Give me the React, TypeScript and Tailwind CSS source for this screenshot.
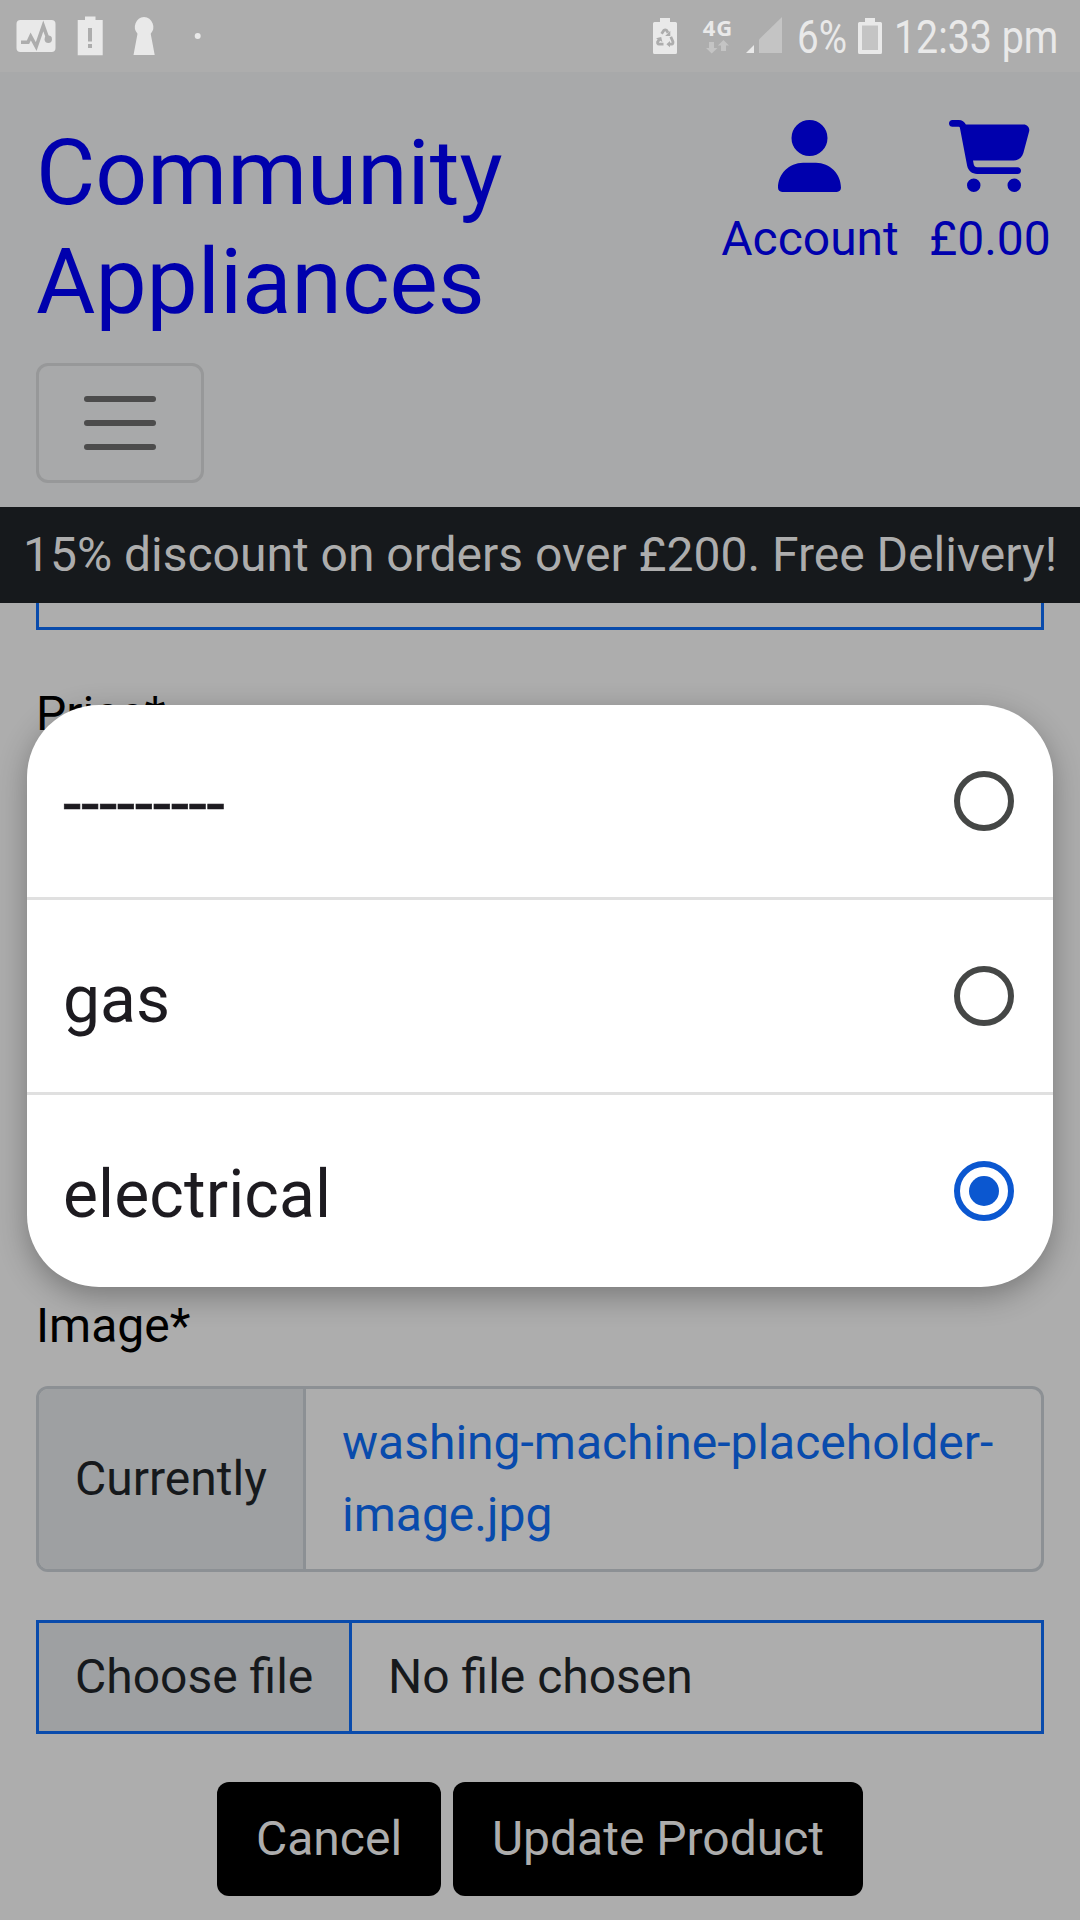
import type { ReactNode } from "react";
import { FaCartShopping, FaUser } from "react-icons/fa6";

function StatusBar() {
  return (
    <div className="flex h-[72px] shrink-0 bg-[#adadad] text-[#e9e9e9]">
      <svg className="h-[72px] w-[210px]" viewBox="0 0 210 72" fill="currentColor">
        <rect x="16.5" y="20" width="39" height="32" rx="4" />
        <path d="M21 42.3h7l2.700-5.800 5.500 10L43.300 26l4.500 12.500" fill="none" stroke="#adadad" strokeWidth="3.600" />
        <circle cx="48.300" cy="39.300" r="3.700" fill="#adadad" />
        <path d="M85 16.500h10.500v3.500h7.200v35.300H77.700V20H85z" />
        <path d="M88 28h4v13.500h-4zM88 44h4v4h-4z" fill="#adadad" />
        <path d="M144 17a10 10 0 0 1 6.700 16.700L154.700 55h-21.200l4-21.300A10 10 0 0 1 144 17z" />
        <circle cx="197.700" cy="36" r="3" />
      </svg>
      <div className="ml-auto flex">
        <svg className="h-[72px] w-[24px]" viewBox="0 0 24 72" fill="currentColor">
          <path d="M7 18h10v4h5.500a1.500 1.500 0 0 1 1.500 1.500v29a1.500 1.500 0 0 1-1.500 1.500h-21A1.500 1.500 0 0 1 0 52.500v-29A1.500 1.500 0 0 1 1.500 22H7z" />
          <g fill="none" stroke="#adadad" strokeWidth="2.800">
            <path d="M8.600 33.800L10.800 30.400Q12.200 29.300 13.600 30.400L15 32.800" />
            <path d="M6.300 39.200L4.600 42Q4.300 44 6 44.200H10.500" />
            <path d="M17.800 36.800L19.900 41.700Q20.300 44 18.500 44.200H16" />
          </g>
          <path d="M17.300 30.800V36h-5.100zM3 38.200l5.200-1.200 1.200 5zM17 41v6.200L13.400 44.200z" fill="#adadad" />
        </svg>
        <div className="ml-[27px] flex w-[28px] flex-col items-center pt-[16px]">
          <span className="font-['Open_Sans',sans-serif] text-[22px] leading-[22px] font-bold tracking-[1px]">4G</span>
          <svg className="mt-[2px] h-[14px] w-[24px]" viewBox="0 0 24 14" fill="#c4c4c4">
            <path d="M3 2h5v6h3.500L5.700 13.500 0 8h3zM15 11h5V5.500h3L17.500 0 11.800 5.500H15z" />
          </svg>
        </div>
        <svg className="ml-[14px] h-[72px] w-[37px]" viewBox="0 0 37 72">
          <path d="M0 53l8-8v8z" fill="#e9e9e9" />
          <path d="M13 39.500L36 17v36H13z" fill="#c4c4c4" />
        </svg>
        <span className="ml-[14px] flex w-[49px] items-center whitespace-nowrap">
          <span className="block origin-left scale-x-[0.84] pt-[2px] text-[46px] leading-[72px]">6%</span>
        </span>
        <svg className="ml-[12px] h-[72px] w-[24px]" viewBox="0 0 24 72" fill="currentColor">
          <path d="M7 18h10v4h5.500a1.500 1.500 0 0 1 1.500 1.500v29a1.500 1.500 0 0 1-1.500 1.500h-21A1.500 1.500 0 0 1 0 52.500v-29A1.500 1.500 0 0 1 1.500 22H7z" />
          <path d="M4 25.500h16V50H4z" fill="#c4c4c4" />
        </svg>
        <span className="ml-[12px] flex w-[186px] items-center whitespace-nowrap">
          <span className="block origin-left scale-x-[0.855] pt-[2px] text-[46px] leading-[72px]">12:33 pm</span>
        </span>
      </div>
    </div>
  );
}

function Header() {
  return (
    <header className="h-[435px] shrink-0 bg-[#a8a9aa]">
      <div className="flex justify-between pr-[30px] text-[#0000ad]">
        <h1 className="w-[500px] pt-[46px] pl-[36px] text-[91.1px] leading-[109px]">Community Appliances</h1>
        <nav className="flex gap-[30px] pt-[48px]">
          <a className="flex w-[180px] flex-col items-center">
            <FaUser className="mr-[0.5px] h-[72px] w-[63px]" />
            <span className="mt-[11px] leading-[72px]">Account</span>
          </a>
          <a className="flex w-[120px] flex-col items-center">
            <FaCartShopping className="mr-[0.5px] h-[72px] w-[81px]" />
            <span className="mt-[11px] leading-[72px]">£0.00</span>
          </a>
        </nav>
      </div>
      <button className="mt-[27px] ml-[36px] flex h-[120px] w-[168px] flex-col items-center justify-center gap-[18px] rounded-[12px] border-[3px] border-[#979899]">
        <span className="h-[6px] w-[72px] rounded-full bg-[#4c4c4c]" />
        <span className="h-[6px] w-[72px] rounded-full bg-[#4c4c4c]" />
        <span className="h-[6px] w-[72px] rounded-full bg-[#4c4c4c]" />
      </button>
    </header>
  );
}

function ProductForm() {
  return (
    <main className="px-[36px] leading-[72px]">
      <div className="h-[27px] border-x-[3px] border-b-[3px] border-[#094bac]" />
      <div className="mt-[48px] h-[612px] text-black">Price*</div>
      <div className="text-black">Image*</div>
      <div className="mt-[24px] flex h-[186px] overflow-hidden rounded-[12px] border-[3px] border-[#8c9094]">
        <div className="flex w-[267px] shrink-0 items-center border-r-[3px] border-[#8c9094] bg-[#9ea0a2] pl-[36px]">
          Currently
        </div>
        <div className="px-[36px] pt-[18px] text-[#094bac]">
          washing-machine-placeholder-
          <br />
          image.jpg
        </div>
      </div>
      <div className="mt-[48px] flex h-[114px] items-center border-[3px] border-[#094bac]">
        <div className="flex h-full w-[313px] items-center border-r-[3px] border-[#094bac] bg-[#9ea0a2] pl-[36px]">
          Choose file
        </div>
        <div className="pl-[36px]">No file chosen</div>
      </div>
      <div className="mt-[48px] flex justify-center gap-[12px] text-[#adadad]">
        <button className="h-[114px] w-[224px] rounded-[12px] bg-black">Cancel</button>
        <button className="h-[114px] w-[410px] rounded-[12px] bg-black">Update Product</button>
      </div>
    </main>
  );
}

function Option({ children, checked = false }: { children: ReactNode; checked?: boolean }) {
  return (
    <li className="box-content flex h-[192px] items-center justify-between pr-[39px] pl-[36px]">
      <span className="pt-[7px] text-[66px] leading-[78px]">{children}</span>
      {checked ? (
        <span className="flex size-[60px] items-center justify-center rounded-full border-[6px] border-[#0b57d0]">
          <span className="size-[30px] rounded-full bg-[#0b57d0]" />
        </span>
      ) : (
        <span className="size-[60px] rounded-full border-[6px] border-[#454746]" />
      )}
    </li>
  );
}

export default function App() {
  return (
    <div className="relative flex h-[1920px] w-[1080px] flex-col overflow-hidden bg-[#adadad] font-[Roboto,sans-serif] text-[48px] text-[#16191c]">
      <StatusBar />
      <Header />
      <div className="h-[96px] shrink-0 bg-[#16191c] pt-[12px] text-center leading-[72px] whitespace-nowrap text-[#adadad]">
        15% discount on orders over £200. Free Delivery!
      </div>
      <ProductForm />
      <ul className="absolute top-[705px] left-[27px] w-[1026px] divide-y-[3px] divide-[#e0e0e0] rounded-[72px] bg-white text-[#1d1b20] shadow-[0_9px_30px_rgba(0,0,0,0.3)]">
        <Option>
          <span className="tracking-[-0.3px] [-webkit-text-stroke:0.6px_#1d1b20]">---------</span>
        </Option>
        <Option>gas</Option>
        <Option checked>
          <span className="tracking-[0.1px]">electrical</span>
        </Option>
      </ul>
    </div>
  );
}
